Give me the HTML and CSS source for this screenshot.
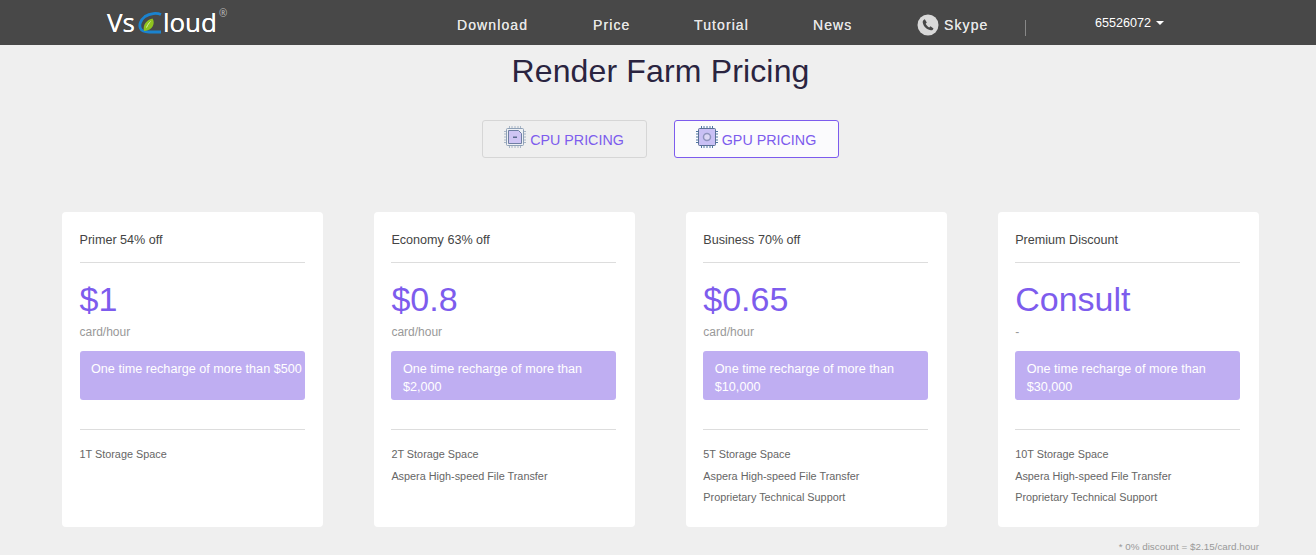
FILE: index.html
```html
<!DOCTYPE html>
<html lang="en">
<head>
<meta charset="utf-8">
<title>Render Farm Pricing</title>
<link rel="stylesheet" href="styles.css">
</head>
<body>
<header class="topbar">
  <a class="logo">
    <span>Vs</span>
    <svg class="logo-mark" width="24" height="22" viewBox="0 0 24 22">
      <path d="M23 2.500C19 .8 12 1 7 4.500C2.500 8 .8 13 2.500 16.500C4 19.500 7 20 11 20H23" fill="none" stroke="#1b83cf" stroke-width="2.800"/>
      <path d="M6 19C4.500 13.500 8 8 14.500 6.500C17.500 11 15 18.500 6 19Z" fill="#8fc31f"/>
      <path d="M8.500 15.500C9.500 13 11 11 12.500 9.500" fill="none" stroke="#dfeeb0" stroke-width="1"/>
    </svg>
    <span class="logo-rest">loud</span>
    <sup class="logo-reg">®</sup>
  </a>
  <nav class="nav">
    <a class="nav-link nav-download">Download</a>
    <a class="nav-link nav-price">Price</a>
    <a class="nav-link nav-tutorial">Tutorial</a>
    <a class="nav-link nav-news">News</a>
    <a class="nav-link nav-skype">
      <svg class="phone" width="22" height="22" viewBox="0 0 22 22">
        <circle cx="11" cy="11" r="10.500" fill="#d9d9d9"/>
        <path d="M7.800 5.200l2 3.200-1.100 1.300c.6 1.500 1.900 2.900 3.500 3.700l1.300-1.100 3 2.100c-.4 1.300-1.500 2.100-2.800 1.900-4.200-.7-7.300-3.900-8-8-.2-1.300.8-2.600 2.100-3.100z" fill="#484848"/>
      </svg>
      Skype
    </a>
    <span class="nav-sep"></span>
    <a class="user">65526072<i class="caret"></i></a>
  </nav>
</header>
<main class="page">
  <h1 class="title">Render Farm Pricing</h1>
  <div class="tabs">
    <button class="tab">
      <svg class="chip" width="22" height="22" viewBox="0 0 22 22">
        <path d="M5.500 0v22M8 0v22M11 0v22M14 0v22M16.500 0v22M0 5.500h22M0 8h22M0 11h22M0 14h22M0 16.500h22" stroke="#a9b6c6" stroke-width="1"/>
        <rect x="2.500" y="2.500" width="17" height="17" rx="1" fill="#eef0f4" stroke="#8ea0b6"/>
        <path d="M4.500 4.500H14.500L17.500 7.500V17.500H4.500Z" fill="#cfc5f4" stroke="#6f7fa3"/>
        <rect x="9" y="10.500" width="4" height="1.500" fill="#5c6c90"/>
      </svg>
      CPU PRICING
    </button>
    <button class="tab tab-active">
      <svg class="chip" width="22" height="22" viewBox="0 0 22 22">
        <path d="M5.500 0v22M8 0v22M11 0v22M14 0v22M16.500 0v22M0 5.500h22M0 8h22M0 11h22M0 14h22M0 16.500h22" stroke="#4f76a3" stroke-width="1"/>
        <rect x="2.500" y="2.500" width="17" height="17" rx="1" fill="#c9c0f5" stroke="#5b7096"/>
        <circle cx="11" cy="11" r="3.500" fill="#dcd7f6" stroke="#8f93bd" stroke-width="1.500"/>
      </svg>
      GPU PRICING
    </button>
  </div>
  <section class="cards">
    <article class="card">
      <h2 class="card-name">Primer 54% off</h2>
      <div class="price">$1</div>
      <div class="unit">card/hour</div>
      <div class="recharge">One time recharge of more than $500</div>
      <ul class="features">
        <li>1T Storage Space</li>
      </ul>
    </article>
    <article class="card">
      <h2 class="card-name">Economy 63% off</h2>
      <div class="price">$0.8</div>
      <div class="unit">card/hour</div>
      <div class="recharge">One time recharge of more than $2,000</div>
      <ul class="features">
        <li>2T Storage Space</li>
        <li>Aspera High-speed File Transfer</li>
      </ul>
    </article>
    <article class="card">
      <h2 class="card-name">Business 70% off</h2>
      <div class="price">$0.65</div>
      <div class="unit">card/hour</div>
      <div class="recharge">One time recharge of more than $10,000</div>
      <ul class="features">
        <li>5T Storage Space</li>
        <li>Aspera High-speed File Transfer</li>
        <li>Proprietary Technical Support</li>
      </ul>
    </article>
    <article class="card">
      <h2 class="card-name">Premium Discount</h2>
      <div class="price">Consult</div>
      <div class="unit">-</div>
      <div class="recharge">One time recharge of more than $30,000</div>
      <ul class="features">
        <li>10T Storage Space</li>
        <li>Aspera High-speed File Transfer</li>
        <li>Proprietary Technical Support</li>
      </ul>
    </article>
  </section>
  <p class="note">* 0% discount = $2.15/card.hour</p>
</main>
</body>
</html>
```
FILE: styles.css
```css
* { box-sizing: border-box; }
html, body { margin: 0; padding: 0; }
body {
  background: #efefef;
  font-family: "Liberation Sans", Arial, sans-serif;
  color: #333;
  height: 555px;
  overflow: hidden;
}
.topbar {
  height: 45px;
  background: #484848;
  display: flex;
  align-items: center;
  padding-left: 107px;
}
.logo {
  width: 350px;
  display: flex;
  align-items: center;
  color: #fff;
  font-family: "Open Sans", sans-serif;
  font-size: 26px;
  line-height: 45px;
  height: 45px;
  text-shadow: 0 0 .6px #fff;
}
.logo-mark { margin: 0 1px 0 3px; }
.logo-reg { font-size: 10px; color: #bbb; align-self: flex-start; line-height: 1; margin: 8px 0 0 2px; text-shadow: none; }
.nav {
  display: flex;
  align-items: center;
  padding-top: 4px;
  color: #e6e6e6;
  font-size: 14px;
  letter-spacing: 1.100px;
}
.nav-link { display: inline-flex; align-items: center; text-shadow: 0 0 .3px #e6e6e6; }
.nav-download { width: 136px; }
.nav-price { width: 101px; }
.nav-tutorial { width: 119px; }
.nav-news { width: 104px; }
.nav-skype { gap: 5px; width: 108px; }
.nav-sep { width: 1px; height: 16px; background: #888; margin-top: 6px; }
.user {
  margin: -3px 0 0 69px;
  color: #fff;
  font-size: 12.600px;
  letter-spacing: 0;
  display: inline-flex;
  align-items: center;
}
.caret {
  width: 0;
  height: 0;
  margin-left: 5px;
  border-left: 4px solid transparent;
  border-right: 4px solid transparent;
  border-top: 4px solid #fff;
}
.page { padding: 0 57px 0 62px; }
.title {
  margin: 7px 0 0;
  font-size: 32px;
  line-height: 38px;
  font-weight: 400;
  text-align: center;
  color: #2a2440;
  letter-spacing: 0.15px;
}
.tabs {
  display: flex;
  justify-content: center;
  gap: 27px;
  margin: 30px 0 0 -1px;
}
.tab {
  width: 165px;
  height: 38px;
  border: 1px solid #d6d6d6;
  border-radius: 3px;
  background: transparent;
  color: #7d5ced;
  font-family: inherit;
  font-size: 14.300px;
  display: flex;
  align-items: center;
  justify-content: center;
  gap: 4px;
  padding: 2px 0 0;
}
.tab-active { border-color: #7d5ced; background: #fbfbfd; }
.chip { margin-top: -6px; }
.cards {
  display: grid;
  grid-template-columns: repeat(4, 261px);
  column-gap: 50.900px;
  margin-top: 54px;
}
.card {
  height: 315px;
  background: #fff;
  border-radius: 4px;
  padding: 0 18.500px 0 17.500px;
  display: flex;
  flex-direction: column;
}
.card-name {
  margin: 0;
  height: 51px;
  padding-top: 20px;
  font-size: 12.600px;
  line-height: 16px;
  font-weight: 400;
  color: #444;
  border-bottom: 1px solid #ddd;
}
.price {
  margin-top: 15px;
  font-size: 34px;
  line-height: 42px;
  color: #7d5ced;
}
.unit {
  margin-top: 3px;
  font-size: 12px;
  line-height: 18px;
  color: #999;
}
.recharge {
  margin-top: 10px;
  height: 49px;
  padding: 9px 0 0 11.500px;
  background: #bfaef2;
  border-radius: 3px;
  color: #fff;
  font-size: 12.650px;
  line-height: 18px;
}
.features {
  list-style: none;
  margin: 29px 0 0;
  padding: 14px 0 0;
  border-top: 1px solid #ddd;
  font-size: 10.850px;
  line-height: 21.500px;
  color: #666;
}
.note {
  margin: 13px 0 0;
  text-align: right;
  font-size: 9.850px;
  line-height: 14px;
  color: #999;
}
```
